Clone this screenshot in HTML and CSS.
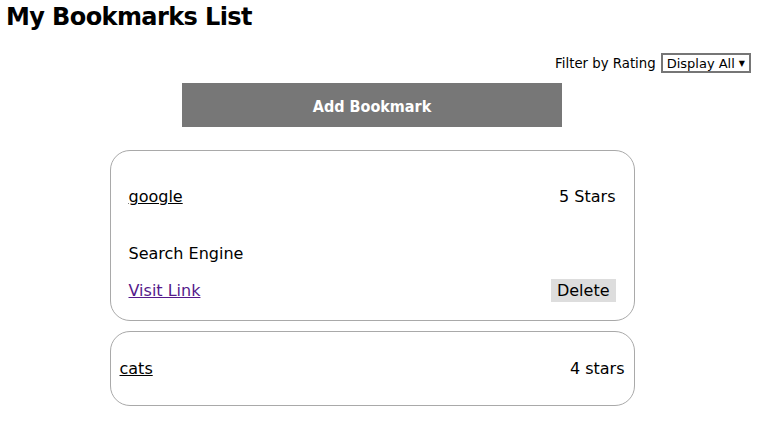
FILE: index.html
```html
<!DOCTYPE html>
<html>
<head>
<meta charset="utf-8">
<link rel="stylesheet" href="styles.css">
</head>
<body>
<h1 class="title">My Bookmarks List</h1>
<div class="filter">
  <label class="filter-label">Filter by Rating</label>
  <span class="select">Display All <span class="arrow">▼</span></span>
</div>
<div class="add-wrap"><button class="add-btn">Add Bookmark</button></div>
<div class="list">
  <div class="card card-open">
    <div class="row">
      <a class="name" href="#">google</a>
      <span class="rating">5 Stars</span>
    </div>
    <p class="desc">Search Engine</p>
    <div class="row row-bottom">
      <a class="visit" href="#">Visit Link</a>
      <button class="delete">Delete</button>
    </div>
  </div>
  <div class="card card-closed">
    <div class="row">
      <a class="name" href="#">cats</a>
      <span class="rating">4 stars</span>
    </div>
  </div>
</div>
</body>
</html>
```
FILE: styles.css
```css
body {
  margin: 0;
  padding: 0 6px;
  font-family: "DejaVu Sans", sans-serif;
  color: #000;
  background: #fff;
}
.title {
  margin: 0;
  padding-top: 2px;
  font-size: 24px;
  font-weight: bold;
  line-height: 30px;
  letter-spacing: -0.6px;
}
.filter {
  display: flex;
  justify-content: flex-end;
  align-items: center;
  gap: 5px;
  margin-top: 21px;
  font-size: 13.3px;
}
.select {
  display: inline-flex;
  align-items: center;
  gap: 4px;
  height: 16px;
  padding: 0 4px;
  border: 2px solid #767676;
  font-size: 13px;
}
.arrow { font-size: 8px; }
.add-wrap {
  display: flex;
  justify-content: center;
  margin-top: 10px;
  padding-right: 13px;
}
.add-btn {
  width: 380px;
  height: 44px;
  background: #777;
  border: none;
  color: #fff;
  font-family: "DejaVu Sans Condensed", "DejaVu Sans", sans-serif;
  font-size: 16px;
  font-weight: bold;
  padding-top: 4px;
}
.list {
  display: flex;
  flex-direction: column;
  align-items: center;
  gap: 10px;
  margin-top: 23px;
  padding-right: 13px;
}
.card {
  width: 525px;
  box-sizing: border-box;
  border: 1px solid #a9a9a9;
  border-radius: 20px;
  font-size: 16px;
}
.card-open {
  height: 171px;
  padding: 36px 18px 0 18px;
}
.card-closed {
  height: 75px;
  padding: 0 9px;
  display: flex;
  flex-direction: column;
  justify-content: center;
}
.row {
  display: flex;
  justify-content: space-between;
  align-items: center;
}
.name { color: #000; }
.desc { margin: 38px 0 16px; }
.visit { color: #551a8b; }
.delete {
  font-family: inherit;
  font-size: 16px;
  background: #ddd;
  border: none;
  padding: 2px 6px;
  margin-top: 0;
  color: #000;
}
```
